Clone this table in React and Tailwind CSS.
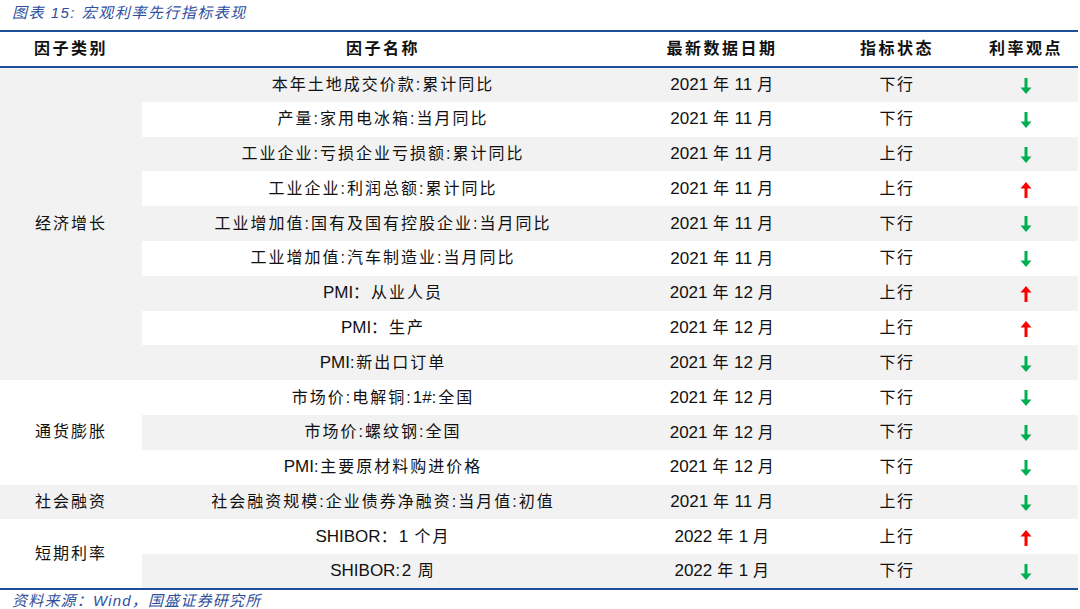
import React from 'react'

const groups = [
  {
    name: '经济增长',
    rows: [
      ['本年土地成交价款:累计同比', '2021 年 11 月', '下行', 'down'],
      ['产量:家用电冰箱:当月同比', '2021 年 11 月', '下行', 'down'],
      ['工业企业:亏损企业亏损额:累计同比', '2021 年 11 月', '上行', 'down'],
      ['工业企业:利润总额:累计同比', '2021 年 11 月', '上行', 'up'],
      ['工业增加值:国有及国有控股企业:当月同比', '2021 年 11 月', '下行', 'down'],
      ['工业增加值:汽车制造业:当月同比', '2021 年 11 月', '下行', 'down'],
      ['PMI：从业人员', '2021 年 12 月', '上行', 'up'],
      ['PMI：生产', '2021 年 12 月', '上行', 'up'],
      ['PMI:新出口订单', '2021 年 12 月', '下行', 'down'],
    ],
  },
  {
    name: '通货膨胀',
    rows: [
      ['市场价:电解铜:1#:全国', '2021 年 12 月', '下行', 'down'],
      ['市场价:螺纹钢:全国', '2021 年 12 月', '下行', 'down'],
      ['PMI:主要原材料购进价格', '2021 年 12 月', '下行', 'down'],
    ],
  },
  {
    name: '社会融资',
    rows: [['社会融资规模:企业债券净融资:当月值:初值', '2021 年 11 月', '上行', 'down']],
  },
  {
    name: '短期利率',
    rows: [
      ['SHIBOR：1 个月', '2022 年 1 月', '上行', 'up'],
      ['SHIBOR:2 周', '2022 年 1 月', '下行', 'down'],
    ],
  },
]

// latin runs are set a little larger and without the cjk letter spacing
const Mixed = ({ text }) =>
  text.split(/([A-Za-z0-9#]+)/).map((part, i) =>
    /^[A-Za-z0-9#]+$/.test(part) ? (
      <span key={i} className="text-[17px] tracking-normal">
        {part}
      </span>
    ) : (
      <span key={i}>{part}</span>
    )
  )

const Arrow = ({ dir }) => {
  if (dir === 'up') {
    return (
      <svg width="12" height="16" viewBox="0 0 12 16" className="inline-block align-middle">
        <polygon points="6,0 11.5,6.5 0.5,6.5" fill="#ff0000" />
        <rect x="4.5" y="6" width="3" height="10" fill="#ff0000" />
      </svg>
    )
  }
  return (
    <svg width="12" height="16" viewBox="0 0 12 16" className="inline-block align-middle">
      <rect x="4.5" y="0" width="3" height="10" fill="#00b050" />
      <polygon points="6,16 11.5,9.5 0.5,9.5" fill="#00b050" />
    </svg>
  )
}

const App = () => {
  let rowIndex = 0

  return (
    <div
      className="w-[1080px] h-[609px] bg-white text-[#111] overflow-hidden"
      style={{ fontFamily: '"Liberation Sans", "Noto Sans CJK SC", sans-serif' }}
    >
      {/* Title */}
      <div className="h-[30px] pl-[12px] pt-[2px] text-[15px] italic text-[#2f4f9c] tracking-[1.5px] leading-[22px]">
        图表 15:  宏观利率先行指标表现
      </div>

      <table className="w-[1078px] table-fixed border-collapse">
        <colgroup>
          <col className="w-[142px]" />
          <col className="w-[482px]" />
          <col className="w-[196px]" />
          <col className="w-[154px]" />
          <col className="w-[104px]" />
        </colgroup>
        <thead>
          <tr className="h-[36px] border-t-2 border-b-2 border-[#1f4e9c] text-[16px] tracking-[2.5px]">
            <th className="font-bold">因子类别</th>
            <th className="font-bold">因子名称</th>
            <th className="font-bold">最新数据日期</th>
            <th className="font-bold">指标状态</th>
            <th className="font-bold">利率观点</th>
          </tr>
        </thead>
        <tbody className="border-b-2 border-[#1f4e9c] text-[16px]">
          {groups.map((group, gi) =>
            group.rows.map((row, ri) => {
              const gray = rowIndex % 2 === 0
              rowIndex++
              const bg = gray ? 'bg-[#f2f2f2]' : 'bg-white'
              return (
                <tr key={`${gi}-${ri}`} className="h-[34.8px]">
                  {ri === 0 && (
                    <td
                      rowSpan={group.rows.length}
                      className={`text-center tracking-[2px] ${gi % 2 === 0 ? 'bg-[#f2f2f2]' : 'bg-white'}`}
                    >
                      {group.name}
                    </td>
                  )}
                  <td className={`text-center tracking-[2px] ${bg}`}>
                    <Mixed text={row[0]} />
                  </td>
                  <td className={`text-center tracking-[0.5px] ${bg}`}>
                    <Mixed text={row[1]} />
                  </td>
                  <td className={`text-center tracking-[1.5px] ${bg}`}>{row[2]}</td>
                  <td className={`text-center ${bg}`}>
                    <Arrow dir={row[3]} />
                  </td>
                </tr>
              )
            })
          )}
        </tbody>
      </table>

      {/* Source */}
      <div className="pl-[12px] pt-[1px] text-[15px] italic text-[#2f4f9c] tracking-[1.2px] leading-[20px]">
        资料来源：Wind，国盛证券研究所
      </div>
    </div>
  )
}

export default App
